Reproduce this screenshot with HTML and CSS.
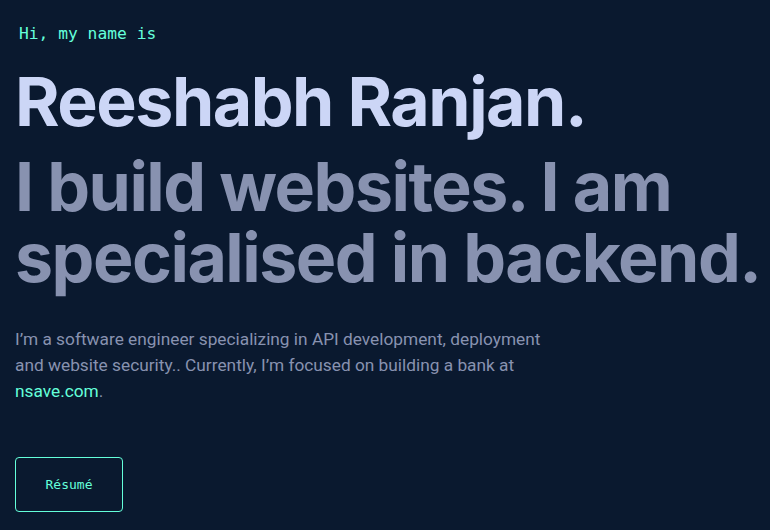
FILE: index.html
```html
<!DOCTYPE html>
<html lang="en">
<head>
<meta charset="utf-8">
<title>Reeshabh Ranjan</title>
<link rel="stylesheet" href="styles.css">
</head>
<body>
<main class="hero">
  <h1 class="intro">Hi, my name is</h1>
  <h2 class="big-heading name">Reeshabh Ranjan.</h2>
  <h3 class="big-heading tagline">I build websites. I am specialised in backend.</h3>
  <p class="about">I’m a software engineer specializing in API development, deployment and website security.. Currently, I’m focused on building a bank at <a class="link" href="#">nsave.com</a>.</p>
  <a class="resume" href="#">Résumé</a>
</main>
</body>
</html>
```
FILE: styles.css
```css
html, body {
  margin: 0;
  padding: 0;
  background: #0a192f;
}
body {
  width: 770px;
  height: 530px;
  overflow: hidden;
  font-family: "Inter", "Liberation Sans", sans-serif;
}
.hero {
  display: flex;
  flex-direction: column;
  align-items: flex-start;
  padding: 24px 0 0 15px;
}
.intro {
  margin: 0 0 0 4px;
  font-family: "DejaVu Sans Mono", monospace;
  font-weight: 400;
  font-size: 16.3px;
  line-height: 20px;
  color: #64ffda;
}
.big-heading {
  margin: 0;
  font-family: "Inter", sans-serif;
  font-weight: 700;
  font-size: 68px;
  letter-spacing: -1.5px;
  line-height: 71px;
}
.name {
  margin-top: 22px;
  color: #ccd6f6;
}
.tagline {
  margin-top: 14px;
  color: #8892b0;
  width: 755px;
}
.about {
  margin: 33px 0 0;
  max-width: 540px;
  font-family: "Roboto", sans-serif;
  font-size: 17.3px;
  line-height: 26px;
  color: #8892b0;
}
.link {
  color: #64ffda;
  text-decoration: none;
}
.resume {
  margin-top: 53px;
  width: 106px;
  height: 53px;
  display: flex;
  align-items: center;
  justify-content: center;
  border: 1px solid #64ffda;
  border-radius: 4px;
  color: #64ffda;
  font-family: "DejaVu Sans Mono", monospace;
  font-size: 13px;
  text-decoration: none;
}
```
